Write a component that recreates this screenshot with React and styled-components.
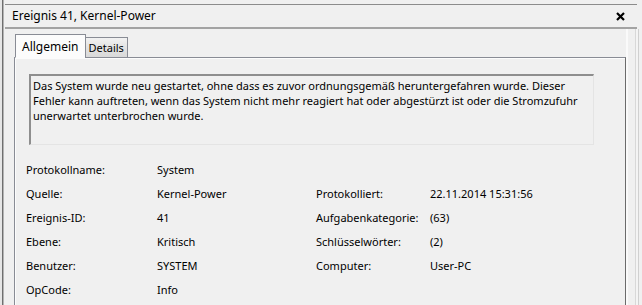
import React from "react";
import styled, {createGlobalStyle} from "styled-components";

const GlobalStyle = createGlobalStyle`
  html, body {
    margin: 0;
    padding: 0;
    background: #f0f0f0;
    overflow: hidden;
  }
  body {
    font-family: "Noto Sans", "Open Sans", sans-serif;
    font-size: 11px;
    color: #000;
  }
`;

// data for the property grid: [label, value, label2, value2]
const fields = [
  ["Protokollname:", "System", "", ""],
  ["Quelle:", "Kernel-Power", "Protokolliert:", "22.11.2014 15:31:56"],
  ["Ereignis-ID:", "41", "Aufgabenkategorie:", "(63)"],
  ["Ebene:", "Kritisch", "Schlüsselwörter:", "(2)"],
  ["Benutzer:", "SYSTEM", "Computer:", "User-PC"],
  ["OpCode:", "Info", "", ""],
];

export default function App() {
  return (
    <>
      <GlobalStyle />
      <Frame>
        <Pane>
          <TitleBar>
            <Title>Ereignis 41, Kernel-Power</Title>
            <CloseButton aria-label="Schließen">
              <svg width="9" height="9" viewBox="0 0 9 9">
                <path d="M1 1 L8 8 M8 1 L1 8" stroke="#000" strokeWidth="2.2" />
              </svg>
            </CloseButton>
          </TitleBar>
          <Row>
            <Body>
              <TabStrip>
                <Tab $active>Allgemein</Tab>
                <Tab>Details</Tab>
              </TabStrip>
              <TabPage>
                <Message>
                  Das System wurde neu gestartet, ohne dass es zuvor ordnungsgemäß heruntergefahren wurde. Dieser
                  <br />
                  Fehler kann auftreten, wenn das System nicht mehr reagiert hat oder abgestürzt ist oder die Stromzufuhr
                  <br />
                  unerwartet unterbrochen wurde.
                </Message>
                <Fields>
                  {fields.map((row, i) =>
                    row.map((cell, j) => (
                      <Cell key={`${i}-${j}`}>{cell}</Cell>
                    ))
                  )}
                </Fields>
              </TabPage>
            </Body>
            <RightEdge />
          </Row>
        </Pane>
      </Frame>
    </>
  );
}

const Frame = styled.div`
  width: 642px;
  height: 305px;
  overflow: hidden;
  background: #f0f0f0;
  border-left: 2px solid #e6e6e6;
  box-sizing: border-box;
`;

const Pane = styled.div`
  height: 100%;
  display: flex;
  flex-direction: column;
  border-left: 1px solid #6f6f6f;
  box-shadow: inset 1px 0 0 #b4b4b4;
`;

const TitleBar = styled.div`
  display: flex;
  align-items: center;
  justify-content: space-between;
  height: 22px;
  margin: 4px 5px 0 2px;
  padding: 0 12px 0 7px;
  border-top: 1px solid #8c8c8c;
  border-bottom: 2px solid #a3a3a3;
`;

const Title = styled.span`
  font-size: 12px;
  line-height: 22px;
`;

const CloseButton = styled.span`
  display: flex;
  align-items: center;
  margin-top: 1px;
`;

const Row = styled.div`
  flex: 1;
  display: flex;
`;

const Body = styled.div`
  flex: 1;
  display: flex;
  flex-direction: column;
  padding: 5px 0 0 11px;
`;

const TabStrip = styled.div`
  display: flex;
  align-items: flex-end;
  height: 24px;
  padding-left: 1px;
  position: relative;
  z-index: 1;
  margin-bottom: -1px;
`;

const Tab = styled.div`
  box-sizing: border-box;
  height: ${(p) => (p.$active ? "24px" : "21px")};
  padding: ${(p) => (p.$active ? "4px 6px 0 6px" : "2px 3px 0 3px")};
  margin-left: ${(p) => (p.$active ? "0" : "-1px")};
  border: 1px solid #898c95;
  border-bottom: ${(p) => (p.$active ? "1px solid #fcfcfc" : "1px solid #898c95")};
  background: ${(p) =>
    p.$active ? "#fcfcfc" : "linear-gradient(#f2f2f2, #e3e3e3 50%, #d9d9d9)"};
  font-size: ${(p) => (p.$active ? "12px" : "11px")};
  line-height: 15px;
`;

const TabPage = styled.div`
  flex: 1;
  border: 1px solid #898c95;
  border-bottom: none;
  border-right: 1px solid #6b6b6b;
  background: #f0f0f0;
  box-shadow: inset 1px 1px 0 #fcfcfc;
  padding: 16px 0 0 11px;
`;

const Message = styled.div`
  box-sizing: border-box;
  width: 565px;
  height: 71px;
  margin-left: 3px;
  padding: 2px 2px;
  border-top: 2px solid #8e8e8e;
  border-left: 2px solid #8e8e8e;
  border-right: 1px solid #e4e4e4;
  border-bottom: 1px solid #e4e4e4;
  font-size: 11px;
  line-height: 15px;
  white-space: nowrap;
`;

const Fields = styled.div`
  display: grid;
  grid-template-columns: 131px 159px 114px auto;
  grid-auto-rows: 24px;
  margin-top: 13px;
`;

const Cell = styled.div`
  font-size: 11px;
  line-height: 24px;
  white-space: nowrap;
`;

const RightEdge = styled.div`
  width: 14px;
  border-left: 2px solid #fafafa;
  box-shadow: inset 7px 0 0 #f0f0f0, inset 8px 0 0 #d8d8d8, inset 10px 0 0 #f4f4f4, inset 11px 0 0 #d0d0d0;
`;
